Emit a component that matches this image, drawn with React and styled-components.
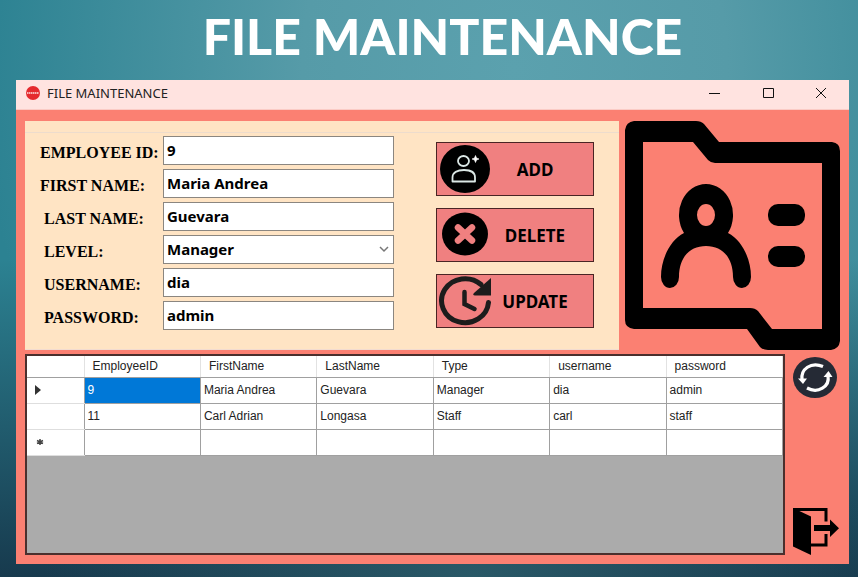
import React, { useState } from 'react';
import styled, { createGlobalStyle } from 'styled-components';

const GlobalStyle = createGlobalStyle`
  * { box-sizing: border-box; }
  body { margin: 0; }
  button, input, select { font: inherit; color: inherit; margin: 0; }
`;

const Slide = styled.main`
  display: flex;
  flex-direction: column;
  min-height: 100vh;
  padding: 0 9px 13px 16px;
  font-family: 'Noto Sans', 'Open Sans', sans-serif;
  color: #000;
  background:
    radial-gradient(ellipse 50% 30% at 55% 100%, rgba(43, 92, 106, 0.9) 0%, rgba(43, 92, 106, 0) 100%),
    linear-gradient(180deg, rgba(22, 54, 74, 0) 45%, rgba(22, 54, 74, 0.95) 100%),
    radial-gradient(ellipse 62% 110% at 60% 12%, #5ba1ae 0%, #569ba8 40%, #2c8292 100%);
`;

const Heading = styled.h1`
  margin: 0;
  padding-left: 20px;
  height: 80px;
  line-height: 72px;
  text-align: center;
  font-family: Lato, sans-serif;
  font-weight: 900;
  font-size: 50px;
  color: #fff;
`;

const Window = styled.section`
  flex: 1;
  display: flex;
  flex-direction: column;
  background: #fb8072;
`;

const TitleBar = styled.header`
  display: flex;
  align-items: center;
  height: 30px;
  padding: 0 9px 3px 10px;
  gap: 7px;
  background: #ffe3e0;
  border-bottom: 1px solid #fbcbc5;
  font-size: 13px;
  color: #222;
`;

const Caption = styled.span`
  flex: 1;
`;

const CaptionButton = styled.button`
  display: grid;
  place-items: center;
  width: 38px;
  height: 26px;
  margin-left: 8px;
  padding: 0;
  border: 0;
  background: none;
`;

const Body = styled.div`
  flex: 1;
  display: flex;
  flex-direction: column;
  gap: 4px;
  padding: 11px 8px 9px 9px;
`;

const TopRow = styled.div`
  display: grid;
  grid-template-columns: 1fr 216px;
  gap: 6px;
`;

const Panel = styled.form`
  padding-top: 11px;
  background: #ffe4c4;
  border-bottom: 1px solid #f3dcd0;
`;

const PanelInner = styled.div`
  display: flex;
  justify-content: space-between;
  padding: 3px 25px 18px 15px;
  border-top: 1px solid #eddccd;
`;

const Fields = styled.div`
  display: grid;
  grid-template-columns: 123px minmax(160px, 231px);
  grid-auto-rows: 29px;
  row-gap: 4px;
`;

const Label = styled.label`
  padding-left: ${(p) => (p.$inset ? '4px' : '0')};
  line-height: 34px;
  font-family: 'Liberation Serif', serif;
  font-weight: 700;
  font-size: 16px;
  white-space: nowrap;
`;

const Input = styled.input`
  width: 100%;
  height: 29px;
  padding: 0 3px 2px;
  border: 1px solid #8b8680;
  border-radius: 0;
  background: #fff;
  font-size: 15px;
  font-weight: 700;
`;

const SelectBox = styled.div`
  display: grid;
  align-items: center;
  & > * { grid-area: 1 / 1; }
  & > svg { justify-self: end; margin-right: 5px; pointer-events: none; }
`;

const Select = styled(Input).attrs({ as: 'select' })`
  appearance: none;
`;

const Actions = styled.div`
  display: flex;
  flex-direction: column;
  gap: 12px;
  padding-top: 6px;
`;

const ActionButton = styled.button`
  display: grid;
  grid-template-columns: 54px 1fr;
  align-items: center;
  width: 158px;
  height: 54px;
  padding: 0 15px 0 1px;
  border: 1px solid #4a2424;
  background: #f08080;
  font-size: 17px;
  font-weight: 700;
  text-align: center;
`;

const Folder = styled.svg`
  display: block;
  width: 100%;
  height: 229px;
`;

const BottomRow = styled.div`
  flex: 1;
  display: grid;
  grid-template-columns: 1fr 48px;
  gap: 8px;
`;

const GridFrame = styled.div`
  border: 2px solid #4b2f2d;
  background: #ababab;
`;

const Table = styled.table`
  width: 100%;
  table-layout: fixed;
  border-collapse: collapse;
  background: #fff;
  font-family: 'Liberation Sans', Arial, sans-serif;
  font-size: 12px;
  color: #222;
`;

const HeadCell = styled.th`
  width: ${(p) => (p.$marker ? '57px' : 'auto')};
  height: 21px;
  padding: 0 0 0 8px;
  border-right: 1px solid #e2e2e2;
  border-bottom: 1px solid #a0a0a0;
  font-weight: 400;
  text-align: left;
`;

const Marker = styled.th`
  height: 26px;
  padding: 0 0 0 7px;
  border-right: 1px solid #a0a0a0;
  border-bottom: 1px solid #dedede;
  text-align: left;
  & > svg { display: block; }
`;

const Cell = styled.td`
  height: 26px;
  padding: 0 0 0 3px;
  border-right: 1px solid #a0a0a0;
  border-bottom: 1px solid #a0a0a0;
  color: ${(p) => (p.$selected ? '#fff' : 'inherit')};
  background: ${(p) => (p.$selected ? '#0078d7' : 'transparent')};
`;

const Side = styled.aside`
  display: flex;
  flex-direction: column;
  justify-content: space-between;
  align-items: flex-start;
  padding: 3px 0 0;
`;

const IconButton = styled.button`
  display: block;
  padding: 0;
  border: 0;
  background: none;
  & > svg { display: block; }
`;

const AddIcon = () => (
  <svg width="54" height="52" viewBox="0 0 54 52" aria-hidden="true">
    <ellipse cx="27" cy="26" rx="25" ry="24" />
    <g fill="none" stroke="#dce8e6" strokeWidth="1.8">
      <ellipse cx="25.500" cy="18" rx="5.500" ry="5" />
      <path d="M14.500 38.500v-4c0-5 5-7.500 11.500-7.500s11 2.500 11 7.500v4z" strokeLinejoin="round" />
    </g>
    <path d="M37.500 12.500l1 2.500 2.500 1-2.500 1-1 2.500-1-2.500-2.500-1 2.500-1z" fill="#fff" stroke="#fff" strokeWidth=".6" />
  </svg>
);

const DeleteIcon = () => (
  <svg width="54" height="52" viewBox="0 0 54 52" aria-hidden="true">
    <ellipse cx="27" cy="25" rx="23" ry="21.500" />
    <path d="M20 18.500l14 13M34 18.500l-14 13" stroke="#f08080" strokeWidth="6.500" strokeLinecap="round" />
  </svg>
);

const UpdateIcon = () => (
  <svg width="54" height="52" viewBox="0 0 54 52" aria-hidden="true">
    <g fill="none" stroke="#1c1c1c" strokeWidth="5" strokeLinecap="round">
      <path d="M50.500 27.500A23.500 22 0 1 1 43 9.500" />
      <path d="M26.500 17v12l10 5" strokeWidth="4.500" />
    </g>
    <path d="M53 3v17.500H37q-3-.5-1-2.500z" fill="#1c1c1c" />
  </svg>
);

const FolderIcon = () => (
  <Folder viewBox="0 0 216 229" preserveAspectRatio="none" role="img" aria-label="Employee folder">
    <path
      fillRule="evenodd"
      d="M9 0H71Q76 0 79 3L94 21H207Q215 22 215 30V220Q214 228 206 229H143Q138 229 135 226L122 208H9Q0 207 0 199V9Q1 1 9 0ZM18 21V187H125Q130 187 133 190L147 208H197V42H90Q86 42 83 39L68 21Z"
    />
    <path
      fillRule="evenodd"
      d="M81 63A27 31 0 0 1 103 112C117 119 126 138 126 156A9 11 0 0 1 108 156C108 136 97 125 81 125S54 136 54 156A9 11 0 0 1 36 156C36 138 45 119 59 112A27 31 0 0 1 81 63ZM81 83A9 11 0 0 0 81 105A9 11 0 0 0 81 83Z"
    />
    <rect x="143" y="83" width="37" height="22" rx="10" />
    <rect x="143" y="125" width="37" height="21" rx="10" />
  </Folder>
);

const RefreshIcon = () => (
  <svg width="44" height="41" viewBox="0 0 44 41" aria-hidden="true">
    <ellipse cx="22" cy="20.500" rx="22" ry="20.500" fill="#252a35" />
    <g fill="none" stroke="#fff" strokeWidth="3.200">
      <path d="M9 23C7.500 12 18 4.500 30 9.500" />
      <path d="M35 19C37 29.500 25 37 14 31" />
    </g>
    <path d="M5 21.500h9L10 27zM30.500 20h9L35.500 14z" fill="#fff" />
  </svg>
);

const ExitIcon = () => (
  <svg width="48" height="48" viewBox="0 0 48 48" aria-hidden="true">
    <path d="M0 1l18 8.500V48L0 39.500z" />
    <path d="M0 2.500h33v12M33 27v11H18" fill="none" stroke="#000" strokeWidth="3" />
    <path d="M21 18h16v-5.500l9 8.700-9 8.800v-6H21z" />
  </svg>
);

const FIELDS = [
  { id: 'employeeId', label: 'EMPLOYEE ID:', value: '9' },
  { id: 'firstName', label: 'FIRST NAME:', value: 'Maria Andrea' },
  { id: 'lastName', label: 'LAST NAME:', value: 'Guevara', inset: true },
  { id: 'level', label: 'LEVEL:', value: 'Manager', inset: true, options: ['Manager', 'Staff'] },
  { id: 'username', label: 'USERNAME:', value: 'dia', inset: true },
  { id: 'password', label: 'PASSWORD:', value: 'admin', inset: true },
];

const ACTIONS = [
  { label: 'ADD', Icon: AddIcon },
  { label: 'DELETE', Icon: DeleteIcon },
  { label: 'UPDATE', Icon: UpdateIcon },
];

const COLUMNS = ['EmployeeID', 'FirstName', 'LastName', 'Type', 'username', 'password'];

const ROWS = [
  ['9', 'Maria Andrea', 'Guevara', 'Manager', 'dia', 'admin'],
  ['11', 'Carl Adrian', 'Longasa', 'Staff', 'carl', 'staff'],
  ['', '', '', '', '', ''],
];

const MARKERS = [
  <path d="M1 1l6 5-6 5z" fill="#333" />,
  null,
  <g stroke="#444" strokeWidth="1.500"><path d="M6 3v6M3 4.500l6 3M9 4.500l-6 3" /></g>,
];

function Field({ id, label, inset, value, options }) {
  const [text, setText] = useState(value);
  const control = { id, value: text, onChange: (e) => setText(e.target.value) };
  return (
    <>
      <Label htmlFor={id} $inset={inset}>{label}</Label>
      {options ? (
        <SelectBox>
          <Select {...control}>
            {options.map((o) => <option key={o}>{o}</option>)}
          </Select>
          <svg width="10" height="7" viewBox="0 0 10 7" aria-hidden="true">
            <path d="M1 1l4 4 4-4" fill="none" stroke="#777" strokeWidth="1.500" />
          </svg>
        </SelectBox>
      ) : (
        <Input type="text" {...control} />
      )}
    </>
  );
}

export default function App() {
  return (
    <Slide>
      <GlobalStyle />
      <Heading>FILE MAINTENANCE</Heading>
      <Window>
        <TitleBar>
          <svg width="14" height="14" viewBox="0 0 14 14" aria-hidden="true">
            <circle cx="7" cy="7" r="7" fill="#e52a2e" />
            <path d="M1 7h12" stroke="#f6b5b5" strokeWidth="2" strokeDasharray="1.500 .5" />
          </svg>
          <Caption>FILE MAINTENANCE</Caption>
          <CaptionButton type="button" aria-label="Minimize">
            <svg width="12" height="12"><path d="M0 6.500h11" stroke="#111" /></svg>
          </CaptionButton>
          <CaptionButton type="button" aria-label="Maximize">
            <svg width="12" height="12"><path d="M1.500 1.500h10v9h-10z" fill="none" stroke="#111" /></svg>
          </CaptionButton>
          <CaptionButton type="button" aria-label="Close">
            <svg width="12" height="12"><path d="M1 1l10 10M11 1L1 11" stroke="#111" /></svg>
          </CaptionButton>
        </TitleBar>
        <Body>
          <TopRow>
            <Panel>
              <PanelInner>
                <Fields>
                  {FIELDS.map((f) => <Field key={f.id} {...f} />)}
                </Fields>
                <Actions>
                  {ACTIONS.map(({ label, Icon }) => (
                    <ActionButton key={label} type="button">
                      <Icon />
                      <span>{label}</span>
                    </ActionButton>
                  ))}
                </Actions>
              </PanelInner>
            </Panel>
            <FolderIcon />
          </TopRow>
          <BottomRow>
            <GridFrame>
              <Table>
                <thead>
                  <tr>
                    <HeadCell $marker />
                    {COLUMNS.map((c) => <HeadCell key={c} scope="col">{c}</HeadCell>)}
                  </tr>
                </thead>
                <tbody>
                  {ROWS.map((row, r) => (
                    <tr key={r}>
                      <Marker scope="row">
                        <svg width="12" height="12" aria-hidden="true">{MARKERS[r]}</svg>
                      </Marker>
                      {row.map((text, c) => (
                        <Cell key={c} $selected={r === 0 && c === 0}>{text}</Cell>
                      ))}
                    </tr>
                  ))}
                </tbody>
              </Table>
            </GridFrame>
            <Side>
              <IconButton type="button" aria-label="Refresh"><RefreshIcon /></IconButton>
              <IconButton type="button" aria-label="Exit"><ExitIcon /></IconButton>
            </Side>
          </BottomRow>
        </Body>
      </Window>
    </Slide>
  );
}
